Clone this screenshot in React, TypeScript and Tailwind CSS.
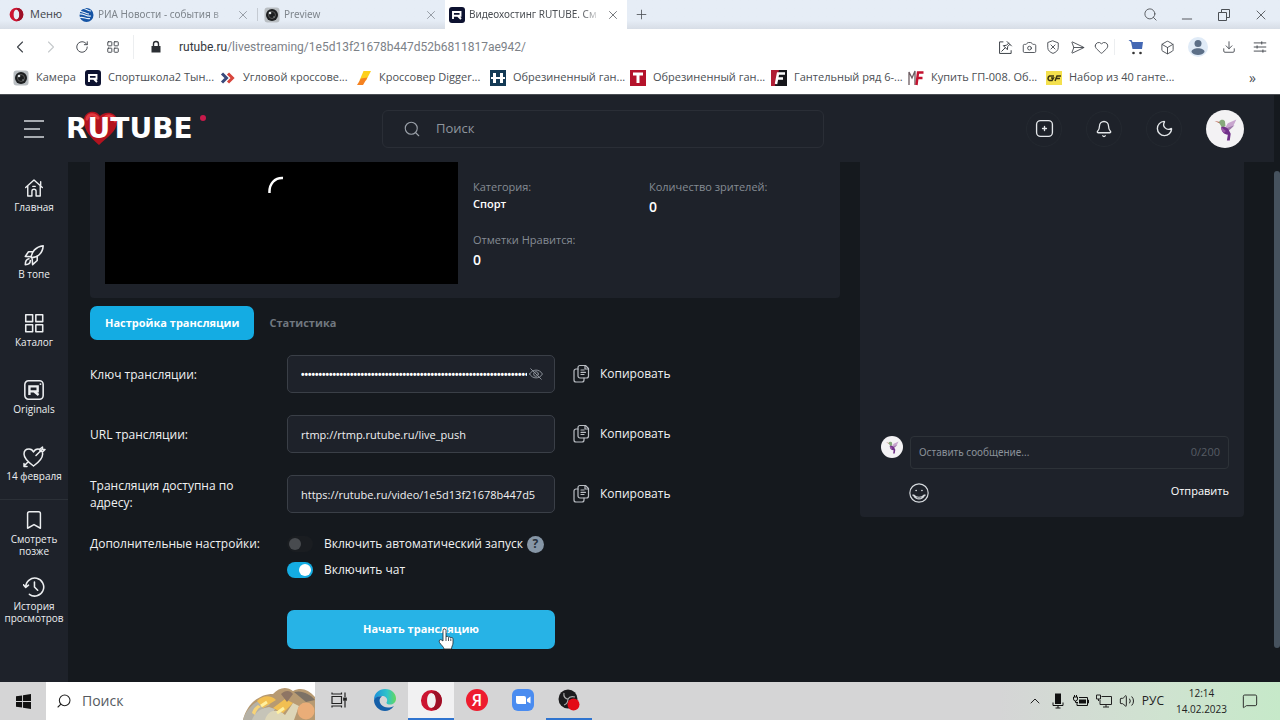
import type { ReactNode } from "react";
import {
  Bell, Bookmark, Box, Camera, ChevronLeft, ChevronRight, ChevronUp, Download, Heart,
  LayoutGrid, MessageSquare, Minus, Moon, Plus, RotateCw, Search, SendHorizontal,
  Volume2, X,
} from "lucide-react";

function Opera({ className }: { className: string }) {
  return (
    <svg viewBox="0 0 24 24" className={className} aria-hidden="true">
      <path fillRule="evenodd" fill="#cc1431" d="M12 1a11 11 0 1 0 0 22 11 11 0 0 0 0-22Zm0 3.200c3 0 4.600 3.400 4.600 7.800s-1.600 7.800-4.600 7.800-4.600-3.400-4.600-7.800 1.600-7.800 4.600-7.800Z" />
      <path fill="#9d1027" d="M17 2.300a11 11 0 0 1 0 19.400c-2 .6-4-.4-5-1.900 3 0 4.600-3.400 4.600-7.800S15 4.200 12 4.200c1-1.500 3-2.500 5-1.900Z" />
    </svg>
  );
}

function CameraFavicon() {
  return (
    <svg viewBox="0 0 16 16" className="size-4 shrink-0" aria-hidden="true">
      <rect x=".5" y=".5" width="15" height="15" rx="3" fill="#b9bec2" />
      <circle cx="8" cy="8" r="6" fill="#1c1e20" />
      <circle cx="8" cy="8" r="3.500" fill="none" stroke="#555" />
      <circle cx="6" cy="6" r="1.300" fill="#dfe3e6" />
      <circle cx="10" cy="10" r=".8" fill="#8c9297" />
    </svg>
  );
}

function RutubeFavicon() {
  return (
    <svg viewBox="0 0 16 16" className="size-4 shrink-0" aria-hidden="true">
      <rect width="16" height="16" rx="3" fill="#0d1230" />
      <path d="M4 12V5h7.500v3.700H4.500M9 9l3 3" fill="none" stroke="#fff" strokeWidth="1.900" />
    </svg>
  );
}

function RiaFavicon() {
  return (
    <svg viewBox="0 0 16 16" className="size-4 shrink-0" aria-hidden="true">
      <circle cx="8.500" cy="8" r="7" fill="#1554a5" />
      <path d="M0 4c5 0 8 3 11 3M1 7c5-1 7 3 12 2M2 10.500c4-1 6 2 10 1M5 1.500c3 0 5 2.500 8 2.500" fill="none" stroke="#e8f0f8" strokeWidth="1.100" />
    </svg>
  );
}

function Bird({ className }: { className: string }) {
  return (
    <svg viewBox="0 0 40 40" className={className} aria-hidden="true">
      <circle cx="20" cy="20" r="20" fill="#f3f2f4" />
      <path d="M9 11.500 16 13l-.5 1.500Z" fill="#b2563f" />
      <path d="M14 12c1-2 5-2.500 6 0l.5 5-4 2c0-3-3-4-2.500-7Z" fill="#86a97c" />
      <path d="M20 19 23 14l9-4-3 6-5 5Z" fill="#c8a5cf" />
      <path d="m22 19 8-3-4 4-3 2Z" fill="#9d78aa" />
      <path d="M16 18c3-1 6 0 8 3l2 4-1 7h-3l1-6c-4 0-7-3-7-8Z" fill="#71308a" />
      <path d="m16 18 5 4-2 2c-2-1-3-3-3-6Z" fill="#9b59a8" />
    </svg>
  );
}

function CopyIcon() {
  return (
    <svg viewBox="0 0 18 20" className="h-5 w-[18px]" fill="none" stroke="#b9bdc3" strokeWidth="1.200" strokeLinecap="round" strokeLinejoin="round" aria-hidden="true">
      <path d="M7 1.500h5.500l3 3V12a2 2 0 0 1-2 2H7a2 2 0 0 1-2-2V3.500a2 2 0 0 1 2-2Z" />
      <path d="M12 1.500v3.500h3.500M8 6h3M8 8.300h4.500M8 10.500h3" />
      <path d="M5 5H3a2 2 0 0 0-2 2v9a2 2 0 0 0 2 2h6a2 2 0 0 0 2-2v-2" />
    </svg>
  );
}

const line = {
  viewBox: "0 0 24 24", fill: "none", stroke: "currentColor", strokeWidth: 1.7,
  strokeLinecap: "round" as const, strokeLinejoin: "round" as const, "aria-hidden": true,
};

const homeIcon = (
  <svg {...line} className="size-5"><path d="M2 11.500 12 2.500l10 9M4.500 9.500V21.500h5V16a2.500 2.500 0 0 1 5 0v5.500h5v-12M20 9V4.500M10.500 10h3" /></svg>
);
const rocketIcon = (
  <svg {...line} className="size-[22px]"><path d="M9 15C9 8.500 14 3 22 2c-.5 8-6 13-13 13ZM10.500 8.500 6 8.500 2.500 13.500 9 14M15.500 13.500V18l-5 4.500L10 16M6.500 16C3.500 16.500 2.500 19 2.500 22.500c3 0 5.500-1.500 5.500-4.500" /></svg>
);
const gridIcon = (
  <svg {...line} className="size-[22px]"><path d="M3 3h7.500v7.500H3ZM14 3h7.500v7.500H14ZM3 14h7.500v7.500H3ZM14 14h7.500v7.500H14Z" /></svg>
);
const originalsIcon = (
  <svg {...line} className="size-[22px]">
    <rect x="2" y="2" width="20" height="20" rx="4" />
    <path d="M7 17.500V8h9v5.500H7.500M12 13.500l5 4" strokeWidth="2.600" strokeLinecap="butt" strokeLinejoin="miter" />
    <path d="M19 5.500h.1" strokeWidth="2" />
  </svg>
);
const heartIcon = (
  <svg {...line} strokeWidth={1.500} className="size-6"><path d="M11.500 21C6 17 2 13.500 2 9c0-3.500 2.500-5 5-5 2.200 0 3.700 1.200 4.500 3C12.500 5 14 4 16 4c.8 0 1.500.2 2 .5M20.500 8c1 5-3.500 9-9 13M14 10.500 20 4.500M18 4V6.500h3L23 4.500h-2.500V2ZM5.500 17.500 2.500 20.500M2 18.500V21.500h3" /></svg>
);
const historyIcon = (
  <svg {...line} className="size-[22px]"><path d="M3 12a9.800 9.800 0 1 1 4 8M.5 9.500 3 12.500 6 10M12.500 6.500V12l3.500 3.500" /></svg>
);

function SideItem({ icon, children }: { icon: ReactNode; children: ReactNode }) {
  return (
    <a href="#" className="flex flex-1 flex-col items-center justify-center gap-0.5 pb-0.5 text-center text-[10px] leading-3 font-normal text-[#eceef0]">
      <span className="flex h-[22px] items-center">{icon}</span>
      {children}
    </a>
  );
}

function Tab({ icon, title, active, width }: { icon: ReactNode; title: string; active?: boolean; width: string }) {
  return (
    <div className={`flex items-center gap-1 pr-1.5 pl-1 ${width} ${active ? "bg-white text-[#4b4f54]" : "text-[#7f868d]"}`}>
      {icon}
      <span className="min-w-0 flex-1 overflow-hidden font-['Noto_Sans',sans-serif] text-[10px] whitespace-nowrap [mask-image:linear-gradient(to_right,black_85%,transparent)]">{title}</span>
      <button type="button" aria-label="Закрыть вкладку" className="flex size-4 items-center justify-center">
        <X className="size-[14px]" strokeWidth={1.300} />
      </button>
    </div>
  );
}

const bookmarks: { title: string; icon: ReactNode; width: string }[] = [
  { title: "Камера", width: "w-[72px]", icon: <CameraFavicon /> },
  { title: "Спортшкола2 Тын...", width: "w-[135px]", icon: <RutubeFavicon /> },
  {
    title: "Угловой кроссове...", width: "w-[136px]",
    icon: <svg viewBox="0 0 16 16" className="size-4 shrink-0"><path d="m2 3.500 4.500 4.500L2 12.500" fill="none" stroke="#3a4a7c" strokeWidth="3" /><path d="m8 3.500 4.500 4.500L8 12.500" fill="none" stroke="#d8453c" strokeWidth="3" /></svg>,
  },
  {
    title: "Кроссовер Digger...", width: "w-[134px]",
    icon: <svg viewBox="0 0 16 16" className="size-4 shrink-0"><path d="M7.500 1H15L10 10.500H3.500Z" fill="#fdd01c" /><path d="M11.500 7.500 7 15H1l4-6.500Z" fill="#f58220" /></svg>,
  },
  {
    title: "Обрезиненный ган...", width: "w-[140px]",
    icon: <svg viewBox="0 0 16 16" className="size-4 shrink-0"><path fill="#143a55" d="M0 0h16v16H0z" /><path d="M4.500 3v10M11.500 3v10" stroke="#fff" strokeWidth="3" /><path d="M1 8h14" stroke="#fff" strokeWidth="2" /></svg>,
  },
  {
    title: "Обрезиненный ган...", width: "w-[141px]",
    icon: <svg viewBox="0 0 16 16" className="size-4 shrink-0"><path fill="#b5122b" d="M0 0h16v16H0z" /><path d="M3 4h10M8 4v9" stroke="#fff" strokeWidth="3" /></svg>,
  },
  {
    title: "Гантельный ряд 6-...", width: "w-[137px]",
    icon: <svg viewBox="0 0 16 16" className="size-4 shrink-0"><path fill="#16161a" d="M0 0h16v16H0z" /><path fill="#b01d34" d="M0 0h8L4 16H0z" /><path d="M5 14 7 3.500h7M6 8.500h6" fill="none" stroke="#fff" strokeWidth="2.500" /></svg>,
  },
  {
    title: "Купить ГП-008. Об...", width: "w-[138px]",
    icon: <svg viewBox="0 0 16 16" className="size-4 shrink-0"><path d="M1 15V2l3 6 3-7v14" fill="none" stroke="#6b5b60" strokeWidth="1.300" /><path d="m8.500 15 1.500-12.500H15.500M9.500 8h5" fill="none" stroke="#c3122f" strokeWidth="2.400" /></svg>,
  },
  {
    title: "Набор из 40 ганте...", width: "w-[150px]",
    icon: <svg viewBox="0 0 16 16" className="size-4 shrink-0"><path fill="#f4e04d" d="M0 1h16v14H0z" /><path d="M8 6H3.500C1.500 7 1.500 10 3.500 10.500H6L7.500 8H5M9 11l2-5h4M10 8.500h4" fill="none" stroke="#3b3410" strokeWidth="1.500" /></svg>,
  },
];

function ToolButton({ label, children }: { label: string; children: ReactNode }) {
  return <button type="button" aria-label={label} className="flex size-4 items-center justify-center">{children}</button>;
}

function Browser() {
  return (
    <div className="font-['Open_Sans','Noto_Sans',sans-serif]">
      <div className="flex h-[29px] items-stretch bg-gradient-to-b from-[#e6edf6] from-70% to-[#d7dde6]">
        <button type="button" className="flex w-[74px] items-center gap-1.5 pl-[9px] text-[11px] text-[#3f444a]">
          <Opera className="size-[15px]" />
          Меню
        </button>
        <Tab icon={<RiaFavicon />} title="РИА Новости - события в" width="w-[183px]" />
        <div className="my-2 mr-0.5 w-px bg-[#c5cbd3]" />
        <Tab icon={<CameraFavicon />} title="Preview" width="w-[185px]" />
        <Tab icon={<RutubeFavicon />} title="Видеохостинг RUTUBE. См" active width="w-[182px]" />
        <button type="button" aria-label="Новая вкладка" className="flex w-7 items-center justify-center text-[#4b4f54]">
          <Plus className="size-[15px]" strokeWidth={1.300} />
        </button>
        <div className="ml-auto flex items-center gap-[21px] pr-[11px] text-[#4b4f54]">
          <ToolButton label="Поиск вкладок"><Search className="size-[15px]" strokeWidth={1.400} /></ToolButton>
          <ToolButton label="Свернуть"><Minus className="mt-2 size-4" strokeWidth={1.400} /></ToolButton>
          <ToolButton label="Восстановить">
            <svg viewBox="0 0 14 14" className="size-[14px]" fill="none" stroke="currentColor"><path d="M1.500 4.500h8v8h-8ZM4.500 4V1.500h8v8H10" /></svg>
          </ToolButton>
          <ToolButton label="Закрыть"><X className="size-4" strokeWidth={1.300} /></ToolButton>
        </div>
      </div>

      <div className="flex h-9 items-center bg-white px-3 text-[#3f444a]">
        <div className="flex items-center gap-[15px]">
          <ToolButton label="Назад"><ChevronLeft className="size-5 shrink-0" strokeWidth={1.300} /></ToolButton>
          <ToolButton label="Вперёд"><ChevronRight className="size-5 shrink-0 text-[#c6c9cc]" strokeWidth={1.300} /></ToolButton>
          <ToolButton label="Обновить"><RotateCw className="size-[14px]" strokeWidth={1.600} /></ToolButton>
          <ToolButton label="Экспресс-панель"><LayoutGrid className="size-[14px]" strokeWidth={1.600} /></ToolButton>
        </div>
        <div className="mx-3 h-6 w-px bg-[#eceef0]" />
        <svg viewBox="0 0 12 14" className="ml-1 h-[14px] w-3" aria-hidden="true"><path d="M1.500 6h9v6.500h-9Z" fill="#2b2e33" /><path d="M3.500 6V4a2.500 2.500 0 0 1 5 0v2" fill="none" stroke="#2b2e33" strokeWidth="1.400" /></svg>
        <div className="ml-[17px] min-w-0 flex-1 font-['Roboto',sans-serif] text-xs text-[#7c8187]">
          <a href="#"><span className="text-[#33373c]">rutube.ru</span>/livestreaming/1e5d13f21678b447d52b6811817ae942/</a>
        </div>
        <div className="flex items-center gap-2 pr-[5px]">
          <ToolButton label="Закрепить">
            <svg {...line} strokeWidth={1.600} className="size-[15px]"><path d="M8 3H2.500v18.500H21V17M14.500 2.500l7 7M17 5l-3.500 3.500-5 .5L15 15.500l.5-5L19 7M11.500 12.500 6 18" /></svg>
          </ToolButton>
          <ToolButton label="Снимок"><Camera className="size-[15px]" strokeWidth={1.400} /></ToolButton>
          <ToolButton label="Блокировка рекламы">
            <svg {...line} strokeWidth={1.500} className="size-[14px]"><path d="M12 1.500 21 5v8c0 5-4 8-9 10-5-2-9-5-9-10V5ZM8.500 8.500l7 7M15.500 8.500l-7 7" /></svg>
          </ToolButton>
          <ToolButton label="Отправить"><SendHorizontal className="size-[15px]" strokeWidth={1.400} /></ToolButton>
          <ToolButton label="Избранное"><Heart className="size-[15px]" strokeWidth={1.400} /></ToolButton>
        </div>
        <div className="flex items-center gap-[15px] border-l border-[#eceef0] pl-[13px]">
          <ToolButton label="Покупки">
            <svg viewBox="0 0 16 16" className="size-4"><path d="M.5 1h3l1 2H15l-1 7H4.500L3 3Z" fill="#4468b4" /><circle cx="5.500" cy="14" r="1.300" fill="#333" /><circle cx="12.500" cy="14" r="1.300" fill="#333" /></svg>
          </ToolButton>
          <ToolButton label="Расширения"><Box className="size-[15px]" strokeWidth={1.400} /></ToolButton>
          <ToolButton label="Профиль">
            <svg viewBox="0 0 20 20" className="size-5 shrink-0"><circle cx="10" cy="10" r="10" fill="#e0ebf7" /><circle cx="10" cy="6.500" r="3.500" fill="#5c6f87" /><path d="M3.500 15c0-5 13-5 13 0-2 4-11 4-13 0Z" fill="#5c6f87" /></svg>
          </ToolButton>
          <ToolButton label="Загрузки"><Download className="size-[14px]" strokeWidth={1.500} /></ToolButton>
          <ToolButton label="Настройки">
            <svg {...line} strokeWidth={1.600} className="size-[14px]"><path d="M2 5h20M2 12h20M2 19h20M15 3v4M7 10v4M17 17v4" /></svg>
          </ToolButton>
        </div>
      </div>

      <div className="flex h-[30px] items-center border-b border-[#4a4e53] bg-white pr-6 pb-1 pl-[13px] text-[11px] text-[#4b4f54]">
        {bookmarks.map((b, i) => (
          <a key={i} href="#" className={`flex shrink-0 items-center gap-[7px] whitespace-nowrap ${b.width}`}>
            {b.icon}
            {b.title}
          </a>
        ))}
        <button type="button" aria-label="Ещё закладки" className="ml-auto text-sm leading-4">»</button>
      </div>
    </div>
  );
}

function Header() {
  const round = "flex size-9 items-center justify-center rounded-full border border-[#242930] text-[#e4e7ea]";
  return (
    <header className="mr-1.5 flex h-[67px] items-center bg-[#1e222a] pr-[30px] pl-6">
      <button type="button" aria-label="Меню" className="text-[#d5d9dd]">
        <svg viewBox="0 0 20 18" className="h-[18px] w-5" stroke="currentColor" strokeWidth="1.300"><path d="M0 1h20M0 9h16M0 17h20" /></svg>
      </button>
      <a href="#" className="relative ml-[22px] flex h-9 w-[142px] items-center">
        <svg viewBox="0 0 36 34" className="absolute top-0 left-[17px] h-[34px] w-9" aria-hidden="true">
          <path d="M16 34C7 26 0 18 1 8 2 0 13-2 17 5c4-5 16-5 17 4 1 11-10 17-18 25Z" fill="#b3131f" />
          <path d="M4 8c1-5 7-6 11-1M21 7c4-4 10-2 11 3" stroke="#e03a3f" strokeWidth="3" fill="none" strokeLinecap="round" />
        </svg>
        <span className="relative font-['DejaVu_Sans',sans-serif] text-[28px] leading-9 font-bold text-white">RUTUBE</span>
        <span className="absolute top-1 right-0.5 size-1.5 rounded-full bg-[#c81a4b]" />
      </a>
      <div className="mx-auto flex h-[38px] w-[442px] items-center gap-[15px] rounded-md border border-[#2a2e36] pr-4 pl-5">
        <Search className="size-[18px] text-[#9aa0a8]" strokeWidth={1.500} />
        <input aria-label="Поиск" placeholder="Поиск" className="min-w-0 flex-1 bg-transparent text-[13px] outline-none placeholder:text-[#8f969e]" />
      </div>
      <div className="flex items-center gap-6 pl-7">
        <button type="button" aria-label="Добавить" className={round}>
          <svg {...line} className="size-[19px]"><rect x="2" y="2" width="20" height="20" rx="5" /><path d="M12 9.500v5M9.500 12h5" /></svg>
        </button>
        <button type="button" aria-label="Уведомления" className={round}><Bell className="size-[18px]" strokeWidth={1.700} /></button>
        <button type="button" aria-label="Тема" className={round}><Moon className="size-[19px]" strokeWidth={1.700} /></button>
        <button type="button" aria-label="Профиль" className="flex size-[38px]"><Bird className="size-[38px]" /></button>
      </div>
    </header>
  );
}

function Sidebar() {
  return (
    <nav className="w-[68px] shrink-0 bg-[#1e222a]">
      <div className="flex h-[338px] flex-col border-b border-[#2b3037]">
        <SideItem icon={homeIcon}>Главная</SideItem>
        <SideItem icon={rocketIcon}>В топе</SideItem>
        <SideItem icon={gridIcon}>Каталог</SideItem>
        <SideItem icon={originalsIcon}>Originals</SideItem>
        <SideItem icon={heartIcon}>14 февраля</SideItem>
      </div>
      <div className="flex h-[134px] flex-col">
        <SideItem icon={<Bookmark className="size-[22px]" strokeWidth={1.600} />}><span>Смотреть позже</span></SideItem>
        <SideItem icon={historyIcon}><span>История просмотров</span></SideItem>
      </div>
    </nav>
  );
}

function Stat({ label, value, small }: { label: string; value: string; small?: boolean }) {
  return (
    <div>
      <div className="text-[11px] leading-[18px] text-[#858c94]">{label}</div>
      <div className={small ? "text-[11px] leading-4 font-semibold text-white" : "text-sm leading-[21px] font-semibold text-white"}>{value}</div>
    </div>
  );
}

function CopyButton() {
  return (
    <button type="button" className="ml-[18px] flex items-center gap-[9px] text-xs font-medium text-[#f0f1f2]">
      <CopyIcon />
      Копировать
    </button>
  );
}

const field = "h-[38px] w-full rounded-[5px] border border-[#3a3f47] bg-[#1e222a] px-[13px] text-[11px] font-medium text-[#f0f1f2] outline-none";
const rowLabel = "w-[197px] shrink-0 pr-8 text-xs leading-[17px] font-medium text-[#f0f1f2]";

function Settings() {
  return (
    <form className="text-[#f0f1f2]">
      <div className="mt-2 flex">
        <button type="button" className="h-[34px] rounded-[7px] bg-[#14ace3] px-[15px] text-[11px] font-bold text-white">Настройка трансляции</button>
        <button type="button" className="px-[15px] text-[11px] font-bold text-[#70777f]">Статистика</button>
      </div>
      <div className="mt-[15px] flex flex-col gap-[22px]">
        <div className="flex items-center">
          <label htmlFor="key" className={rowLabel}>Ключ трансляции:</label>
          <div className="relative w-[268px]">
            <input id="key" type="password" readOnly value="1e5d13f21678b447d52b6811817ae9421e5d13f21678b447d52b6811817ae9421e5d13f2" className="h-[38px] w-full rounded-[5px] border border-[#3a3f47] bg-[#1e222a] pr-[27px] pl-[13px] font-['Liberation_Sans',sans-serif] text-[10px] font-bold text-white outline-none" />
            <button type="button" aria-label="Показать ключ" className="absolute top-3 right-3 text-[#8b9199]">
              <svg {...line} className="size-[14px]"><path d="M1 12c5-9 17-9 22 0-5 9-17 9-22 0ZM3 3l18 18" /><circle cx="12" cy="12" r="4" /></svg>
            </button>
          </div>
          <CopyButton />
        </div>
        <div className="flex items-center">
          <label htmlFor="server" className={rowLabel}>URL трансляции:</label>
          <div className="w-[268px]"><input id="server" readOnly value="rtmp://rtmp.rutube.ru/live_push" className={field} /></div>
          <CopyButton />
        </div>
        <div className="flex items-center">
          <label htmlFor="link" className={rowLabel}>Трансляция доступна по адресу:</label>
          <div className="w-[268px]"><input id="link" readOnly value="https://rutube.ru/video/1e5d13f21678b447d5" className={field} /></div>
          <CopyButton />
        </div>
        <div className="flex text-xs font-medium">
          <div className="w-[197px] shrink-0 leading-[18px] whitespace-nowrap">Дополнительные настройки:</div>
          <div className="flex flex-col gap-2">
            <div className="flex items-center leading-[18px]">
              <input id="auto" type="checkbox" className="relative mr-[11px] h-4 w-[26px] appearance-none rounded-full bg-[#1a1d21] before:absolute before:top-0.5 before:left-0.5 before:size-3 before:rounded-full before:bg-[#484b4f] before:content-['']" />
              <label htmlFor="auto">Включить автоматический запуск</label>
              <span className="ml-1 flex size-[17px] items-center justify-center rounded-full bg-[#8696a6] text-xs font-bold text-[#27313c]">?</span>
            </div>
            <div className="flex items-center leading-[18px]">
              <input id="chat" type="checkbox" defaultChecked className="relative mr-[11px] h-4 w-[26px] appearance-none rounded-full bg-[#14ace3] before:absolute before:top-0.5 before:right-0.5 before:size-3 before:rounded-full before:bg-white before:content-['']" />
              <label htmlFor="chat">Включить чат</label>
            </div>
          </div>
        </div>
      </div>
      <div className="relative mt-[31px] ml-[197px] w-[268px]">
        <button type="button" className="h-[39px] w-full rounded-[7px] bg-[#27b3e6] text-[11px] font-bold text-white">Начать трансляцию</button>
        <svg viewBox="0 0 16 22" className="absolute top-[18px] left-[151px] h-[22px] w-4" aria-hidden="true">
          <path d="M5 13V2.500a1.500 1.500 0 0 1 3 0V9a1.400 1.400 0 0 1 2.500.3 1.400 1.400 0 0 1 2.300.6 1.300 1.300 0 0 1 2.200 1V15c0 2-1.500 3.500-1.500 6H6c0-2-3-4-4.500-6.500C.5 12.500 2 11 3.500 12Z" fill="#fff" stroke="#20262c" strokeWidth=".8" />
          <path d="M8 9v4M10.500 9.500V13M12.800 10.500V13" stroke="#20262c" strokeWidth=".8" />
        </svg>
      </div>
    </form>
  );
}

function Chat() {
  return (
    <aside className="flex h-[355px] w-[384px] shrink-0 flex-col justify-end rounded-b bg-[#1e222a] px-[15px] pb-3.5">
      <div className="flex gap-[7px] pl-1.5">
        <Bird className="size-[22px] shrink-0" />
        <div className="flex h-[33px] min-w-0 flex-1 items-center rounded border border-[#2d3238] px-2">
          <input aria-label="Сообщение" placeholder="Оставить сообщение..." className="min-w-0 flex-1 bg-transparent font-['Noto_Sans',sans-serif] text-[10px] outline-none placeholder:text-[#8a9199]" />
          <span className="text-[11px] text-[#565c64]">0/200</span>
        </div>
      </div>
      <div className="mt-3.5 flex justify-between pl-[34px]">
        <button type="button" aria-label="Смайлы" className="text-[#d5d9dd]">
          <svg {...line} strokeWidth={1.400} className="size-5"><circle cx="12" cy="12" r="11" /><path d="M8.500 9h.1M15.500 9h.1" strokeWidth="2" /><path d="M4.500 14.500h1.500c2.500 3.500 9.500 3.500 12 0h1.500M5.500 15c3 5.500 10 5.500 13 0" /></svg>
        </button>
        <button type="button" className="h-4 text-[11px] leading-4 font-medium text-white">Отправить</button>
      </div>
    </aside>
  );
}

function TaskButton({ label, active, children }: { label: string; active?: string; children: ReactNode }) {
  return <button type="button" aria-label={label} className={`flex w-[46px] items-center justify-center border-b-2 ${active ?? "border-transparent"}`}>{children}</button>;
}

function Taskbar() {
  return (
    <footer className="flex h-[38px] items-stretch bg-[linear-gradient(to_right,#d5d5d6_78%,#cfe3d0_91%,#c6e9c9)] font-['Open_Sans','Noto_Sans',sans-serif] text-[#222]">
      <button type="button" aria-label="Пуск" className="flex w-[46px] items-center justify-center">
        <svg viewBox="0 0 16 16" className="size-[15px]"><path d="M0 2.500 6.500 1.500v6H0ZM7.500 1.300 16 0v7.500H7.500ZM0 8.500h6.500v6L0 13.500ZM7.500 8.500H16V16l-8.500-1.300Z" fill="#111" /></svg>
      </button>
      <div className="relative mr-px flex w-[269px] items-center gap-2.5 bg-white pl-2.5">
        <Search className="size-4 -scale-x-100" strokeWidth={1.600} />
        <input aria-label="Поиск в системе" placeholder="Поиск" className="w-[120px] bg-transparent text-sm outline-none placeholder:text-[#555a60]" />
        <svg viewBox="0 0 72 34" className="absolute right-0 bottom-0 h-[34px] w-[72px]" aria-hidden="true">
          <path d="M0 34C4 18 16 8 30 8c6-7 14-8 20-3 8-4 15-2 22 6v23Z" fill="#b79a72" />
          <path d="M0 34c3-10 10-18 21-21l6 6c-9 3-14 8-16 15Z" fill="#b5b1a6" />
          <path d="M9 34c3-8 9-12 17-13l6 2-6 11Z" fill="#c6c4b8" />
          <path d="M14 15c6-6 14-6 19-1l-13 8ZM30 22l12-9 8 4-10 10Z" fill="#f2bf52" />
          <path d="M38 8c4-4 9-4 12 0l-6 8Z" fill="#8e7564" />
          <path d="M22 34c3-10 12-12 20-5l8-12 6 3-5 14Z" fill="#ddd6b8" />
          <path d="M9 27c1-4 3-6 6-8l3 2c-3 1-5 4-6 8Z" fill="#f7d377" />
          <circle cx="63" cy="25" r="8.500" fill="#eaad78" />
          <path d="M51 6c8-2 16 2 21 8l-9 2Z" fill="#7d7266" />
          <path d="M18 20l6-4M34 27l7-5" stroke="#fff0a0" strokeWidth="3" />
        </svg>
      </div>
      <TaskButton label="Представление задач">
        <svg viewBox="0 0 16 16" className="size-4" fill="none" stroke="#222" strokeWidth="1.200"><path d="M1 4.500h9.500v7H1ZM1 .5v1.500h9.500V.5M1 15.500V14h9.500v1.500M14 .5V5M14 9v6.500" /><path d="M12.800 6h2.400v2.200h-2.400Z" fill="#222" /></svg>
      </TaskButton>
      <TaskButton label="Edge">
        <svg viewBox="0 0 24 24" className="size-6">
          <defs><linearGradient id="edge" x1="0" x2="1"><stop stopColor="#1b8fdb" /><stop offset=".6" stopColor="#2fc4c9" /><stop offset="1" stopColor="#66d95c" /></linearGradient></defs>
          <path d="M1 12C1 5 6 1 12 1c7 0 11 5 11 9.500 0 4-3 6-6 6-3.500 0-4-1.500-3-3C15 10 12 8 9 8c-4 0-7 2-8 4Z" fill="url(#edge)" />
          <path d="M1 12c1-3 5-4.500 8-3.500-3 1.500-3 5-1 8 3 3.500 8 4 13 1.500C18 22 15 23 12 23 6 23 1 18 1 12Z" fill="#155fa8" />
        </svg>
      </TaskButton>
      <TaskButton label="Opera" active="border-[#2f74cf] bg-[#f1f1f2]"><Opera className="size-[23px]" /></TaskButton>
      <TaskButton label="Яндекс">
        <span className="flex size-[22px] items-center justify-center rounded-full bg-[#ee1c2e] text-base leading-none font-semibold text-white">Я</span>
      </TaskButton>
      <TaskButton label="Zoom">
        <svg viewBox="0 0 22 22" className="size-[22px]"><rect width="22" height="22" rx="6" fill="#4a8cf0" /><path d="M4 7h8a2 2 0 0 1 2 2v6H6a2 2 0 0 1-2-2ZM15 10l3.500-2.500v7L15 12.500Z" fill="#fff" /></svg>
      </TaskButton>
      <TaskButton label="OBS" active="border-[#2f74cf]">
        <svg viewBox="0 0 22 22" className="size-[22px]"><circle cx="10" cy="10" r="9.500" fill="#1b1b1d" /><path d="M6 4c-1 4 2 6 4 6M17 8c-4-1-6 0-7 2M6 16c3-1 4-3 4-6" stroke="#aaa" strokeWidth="1.200" fill="none" /><circle cx="15.500" cy="15.500" r="6" fill="#e30b17" /></svg>
      </TaskButton>
      <div className="ml-auto flex items-center gap-[7px] pr-[22px]">
        <ChevronUp className="size-4" strokeWidth={1.500} />
        <svg viewBox="0 0 16 16" className="size-4" aria-hidden="true"><path d="M5 .5h6v10.500H5Z" fill="#111" /><path d="M3 9.500v3h10v-3M8 12.500V15M5.500 15h5" fill="none" stroke="#111" /></svg>
        <svg viewBox="0 0 16 16" className="size-4" aria-hidden="true"><path d="M6 6.500h7v4H6Z" fill="#111" /><path d="M6 4.500h8.500v8H4V9.500M14.500 7h1v3h-1M.5 4h4v2a2 2 0 0 1-4 0ZM1.500 2v2M3.500 2v2M2.500 8v1.500H5" fill="none" stroke="#111" /></svg>
        <svg viewBox="0 0 16 16" className="size-4" aria-hidden="true"><path d="M5.500 3.500h10v8H4V7M10 11.500V14M7 14h6M.5 2h4v4h-4ZM2.500 6v2" fill="none" stroke="#222" /></svg>
        <Volume2 className="size-4" strokeWidth={1.500} />
        <span className="text-xs">РУС</span>
        <time className="ml-[5px] text-center text-[10px] leading-4">12:14<br />14.02.2023</time>
        <MessageSquare className="ml-2 size-4" strokeWidth={1.400} />
      </div>
    </footer>
  );
}

export default function App() {
  return (
    <div className="flex min-h-screen flex-col bg-[#15191e]">
      <Browser />
      <div className="flex flex-1 flex-col font-['Open_Sans','Noto_Sans',sans-serif]">
        <Header />
        <div className="flex flex-1">
          <Sidebar />
          <main className="flex min-w-0 flex-1 items-start gap-5 pr-[30px] pl-[22px]">
            <div className="min-w-0 flex-1">
              <section className="flex rounded-b bg-[#1e222a] px-[15px] pb-[14px]">
                <div className="h-[122px] w-[353px] shrink-0 bg-black">
                  <svg viewBox="0 0 28 28" className="mx-auto mt-[14px] size-7" fill="none"><path d="M1.500 17C1 7.500 7 1.500 15 2" stroke="#fff" strokeWidth="2.500" /></svg>
                </div>
                <div className="grid flex-1 grid-cols-2 content-start gap-y-[14px] pt-4 pl-[15px]">
                  <Stat label="Категория:" value="Спорт" small />
                  <Stat label="Количество зрителей:" value="0" />
                  <Stat label="Отметки Нравится:" value="0" />
                </div>
              </section>
              <Settings />
            </div>
            <Chat />
          </main>
          <div className="flex w-1.5 flex-col pt-[9px] pb-[34px]"><div className="flex-1 rounded-full bg-[#46525e]" /></div>
        </div>
      </div>
      <Taskbar />
    </div>
  );
}
